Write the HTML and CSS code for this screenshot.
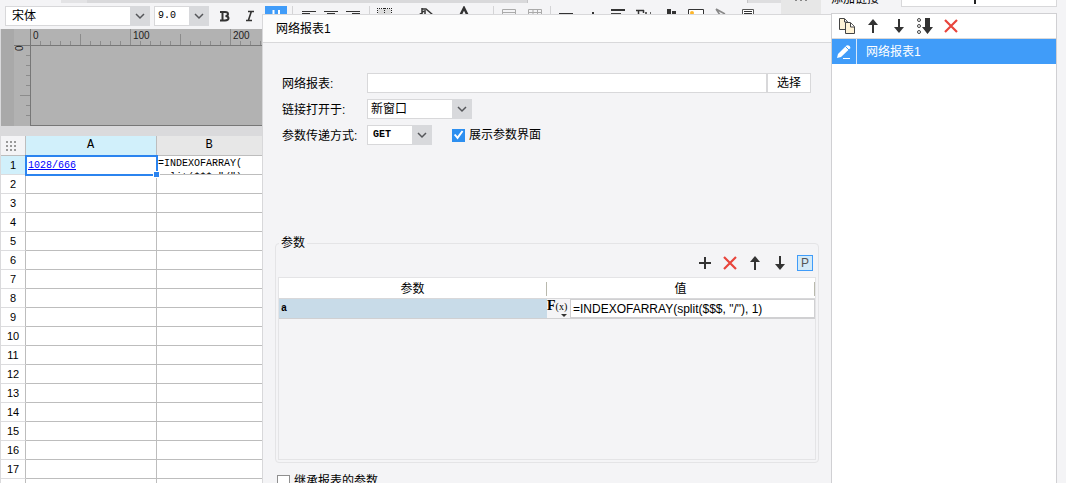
FILE: index.html
```html
<!DOCTYPE html>
<html lang="zh-CN">
<head>
<meta charset="utf-8">
<title>网络报表1</title>
<link rel="stylesheet" href="styles.css">
</head>
<body>
<svg class="defs" aria-hidden="true">
  <symbol id="chevron" viewBox="0 0 20 20"><path d="M6 8l4 4 4-4" fill="none" stroke="#55565a" stroke-width="1.5"/></symbol>
  <symbol id="up" viewBox="0 0 16 16"><path d="M8 15V4" stroke="#333" stroke-width="2"/><path d="M8 1L3 7h10z" fill="#333"/></symbol>
  <symbol id="down" viewBox="0 0 16 16"><path d="M8 1v11" stroke="#333" stroke-width="2"/><path d="M8 15L3 9h10z" fill="#333"/></symbol>
  <symbol id="delete" viewBox="0 0 16 16"><path d="M2 2l12 12M14 2L2 14" stroke="#e8453c" stroke-width="2.2"/></symbol>
</svg>
<div class="app">
  <main class="designer">
    <div class="tabs"><span class="tab-gap"></span><span class="tab-line"></span><span class="tab-space"></span><span class="tab-end"></span><span class="tab-more"><i></i><i></i><i></i></span></div>
    <div class="toolbar">
      <span class="combo font-name"><select aria-label="字体"><option>宋体</option></select><svg><use href="#chevron"/></svg></span>
      <span class="combo font-size"><select aria-label="字号"><option>9.0</option></select><svg><use href="#chevron"/></svg></span>
      <button class="tool bold" aria-label="加粗"><svg viewBox="0 0 26 20"><path d="M9 6h5q3 0 3 2t-2.500 2q3 .2 3 2.300t-3.500 2.200H9M11.500 6v9" fill="none" stroke="#333" stroke-width="2"/></svg></button>
      <button class="tool" aria-label="斜体"><svg viewBox="0 0 26 20"><path d="M11 5.500h6M9 14.500h6M14.500 5l-3 9" fill="none" stroke="#333" stroke-width="1.600"/></svg></button>
      <button class="tool active" aria-label="下划线"><svg viewBox="0 0 22 20"><path d="M8.500 4v8M14 4v8" stroke="#fff" stroke-width="2"/></svg></button>
      <i class="sep"></i>
      <button class="tool align" aria-label="左对齐"><svg viewBox="0 0 22 20"><path d="M4 5.500h14M4 7.500h8M4 11h14" stroke="#333"/></svg></button>
      <button class="tool align" aria-label="居中"><svg viewBox="0 0 22 20"><path d="M4 5.500h14M7 7.500h8M4 11h14" stroke="#333"/></svg></button>
      <button class="tool align" aria-label="右对齐"><svg viewBox="0 0 22 20"><path d="M4 5.500h14M10 7.500h8M4 11h14" stroke="#333"/></svg></button>
      <i class="sep"></i>
      <button class="tool border" aria-label="边框"><svg viewBox="0 0 20 20"><path d="M3 3h13v12H3z" fill="#ddd"/><path d="M2 2.500h15M2.500 2v14M9.500 2v14M16.500 2v14" stroke="#222" stroke-dasharray="1 1"/></svg></button>
      <button class="tool wide" aria-label="背景色"><svg viewBox="0 0 48 20"><path d="M27 2v7M27 3h4l7 6M29 5l-5 4M30 4v5" fill="none" stroke="#333" stroke-width="1.500"/></svg></button>
      <button class="tool wide" aria-label="字色"><svg viewBox="0 0 48 20"><path d="M17 10l4-8 4 8" fill="none" stroke="#333" stroke-width="2.500"/></svg></button>
      <i class="sep tight"></i>
      <button class="tool" aria-label="合并"><svg viewBox="0 0 26 20"><path d="M6.500 3.500h13v12h-13zM6 6.500h14" fill="none" stroke="#aaa"/></svg></button>
      <button class="tool" aria-label="取消合并"><svg viewBox="0 0 26 20"><path d="M6.500 3.500h13v12h-13zM6 6.500h14M11 3v12M15.500 3v12" fill="none" stroke="#aaa"/></svg></button>
      <i class="sep tight"></i>
      <button class="tool" aria-label="单元格"><svg viewBox="0 0 26 20"><path d="M6 8h14" stroke="#333" stroke-width="2"/></svg></button>
      <button class="tool" aria-label="插入"><svg viewBox="0 0 26 20"><path d="M14 6v8" stroke="#333" stroke-width="2"/></svg></button>
      <button class="tool" aria-label="文本"><svg viewBox="0 0 26 20"><path d="M6 4h14" stroke="#333" stroke-width="2"/><path d="M6 7.500h10" stroke="#444"/></svg></button>
      <button class="tool" aria-label="公式"><svg viewBox="0 0 26 20"><path d="M5 4.500h8M7.500 4v10M12.500 4v3M14 7h2M19 7h1" fill="none" stroke="#333" stroke-width="1.500"/></svg></button>
      <button class="tool" aria-label="图表"><svg viewBox="0 0 26 20"><path d="M12 3v11M17 5v9" stroke="#333" stroke-width="4"/></svg></button>
      <button class="tool" aria-label="图片"><svg viewBox="0 0 26 20"><path d="M5.500 3.500h15v12h-15z" fill="#fff" stroke="#333"/><circle cx="9" cy="7" r="2" fill="#fdb62b"/></svg></button>
      <button class="tool" aria-label="斜线"><svg viewBox="0 0 26 20"><path d="M7 3l9 5M7 3l4 6" stroke="#888" stroke-width="1.500"/></svg></button>
      <button class="tool" aria-label="子报表"><svg viewBox="0 0 26 20"><path d="M7.500 3.500h11v14h-11z" fill="#fff" stroke="#555"/><path d="M9 5.500h8M9 7.500h8" stroke="#333"/></svg></button>
    </div>
    <section class="work">
      <div class="ruler">
        <svg viewBox="0 0 261 97" aria-hidden="true">
          <defs>
            <pattern id="tx" x="29" width="10" height="17" patternUnits="userSpaceOnUse"><path d="M.5 12v5" stroke="#8c8c8c"/></pattern>
          </defs>
          <path d="M0 0h13v97H0z" fill="#a9a9a9"/>
          <path d="M30 0h231v17H30z" fill="url(#tx)"/>
          <g stroke="#8c8c8c">
            <path d="M129.500 0v16M229.500 0v16M79.500 5v11M179.500 5v11"/>
            <path d="M25 26.500h5M25 36.500h5M25 46.500h5M25 56.500h5M19 66.500h11M25 76.500h5M25 86.500h5"/>
          </g>
          <path d="M29.500 0v97M13 16.500h248M30 96.500h231" stroke="#777"/>
          <g class="ruler-text"><text x="32" y="10">0</text><text x="132" y="10">100</text><text x="232" y="10">200</text><text transform="translate(22 22) rotate(-90)">0</text></g>
        </svg>
      </div>
      <table class="sheet">
        <thead><tr><th class="corner" aria-label="全选"><svg viewBox="0 0 24 18"><path d="M5 5h12M5 9h12M5 13h12" stroke="#999" stroke-width="2" stroke-dasharray="2 2"/></svg></th><th class="col-a">A</th><th class="col-b">B</th></tr></thead>
        <tbody>
          <tr><th class="current">1</th><td class="selected"><a href="#">1028/666</a><i class="handle"></i></td><td><div class="formula">=INDEXOFARRAY(<br>split($$$,"/"),</div></td></tr>
          <tr><th>2</th><td></td><td></td></tr>
          <tr><th>3</th><td></td><td></td></tr>
          <tr><th>4</th><td></td><td></td></tr>
          <tr><th>5</th><td></td><td></td></tr>
          <tr><th>6</th><td></td><td></td></tr>
          <tr><th>7</th><td></td><td></td></tr>
          <tr><th>8</th><td></td><td></td></tr>
          <tr><th>9</th><td></td><td></td></tr>
          <tr><th>10</th><td></td><td></td></tr>
          <tr><th>11</th><td></td><td></td></tr>
          <tr><th>12</th><td></td><td></td></tr>
          <tr><th>13</th><td></td><td></td></tr>
          <tr><th>14</th><td></td><td></td></tr>
          <tr><th>15</th><td></td><td></td></tr>
          <tr><th>16</th><td></td><td></td></tr>
          <tr><th>17</th><td></td><td></td></tr>
          <tr><th></th><td></td><td></td></tr>
        </tbody>
      </table>
    </section>

    <section class="dialog" role="dialog" aria-labelledby="dialog-title">
      <h1 class="dialog-title" id="dialog-title">网络报表1</h1>
      <form class="dialog-body">
        <div class="fields">
          <label for="report">网络报表:</label>
          <div class="field"><input class="path" id="report" type="text"><button class="choose" type="button">选择</button></div>
          <label for="target">链接打开于:</label>
          <div class="field"><span class="combo target"><select id="target"><option>新窗口</option></select><svg><use href="#chevron"/></svg></span></div>
          <label for="method">参数传递方式:</label>
          <div class="field"><span class="combo method"><select id="method"><option>GET</option></select><svg><use href="#chevron"/></svg></span>
            <label class="check show-ui"><input type="checkbox" checked>展示参数界面</label></div>
        </div>
        <fieldset class="params">
          <legend>参数</legend>
          <div class="param-tools">
            <button type="button" aria-label="添加"><svg viewBox="0 0 16 16"><path d="M8 2v12M2 8h12" stroke="#333" stroke-width="2"/></svg></button>
            <button type="button" aria-label="删除"><svg><use href="#delete"/></svg></button>
            <button type="button" aria-label="上移"><svg><use href="#up"/></svg></button>
            <button type="button" aria-label="下移"><svg><use href="#down"/></svg></button>
            <button type="button" class="p-button">P</button>
          </div>
          <div class="param-box">
            <table class="param-table">
              <thead><tr><th><span>参数</span></th><th><span>值</span></th></tr></thead>
              <tbody><tr><td class="name">a</td><td><div class="value"><button type="button" aria-label="公式"><b>F</b><small>(x)</small><svg viewBox="0 0 6 4"><path d="M0 0h6L3 3z" fill="#333"/></svg></button><input type="text" aria-label="值" value='=INDEXOFARRAY(split($$$, "/"), 1)'></div></td></tr></tbody>
            </table>
          </div>
        </fieldset>
        <label class="check inherit"><input type="checkbox">继承报表的参数</label>
      </form>
    </section>
  </main>

  <aside class="links">
    <div class="add-row"><span>添加链接</span><button aria-label="添加链接"><svg viewBox="0 0 12 12"><path d="M6 0v11M0 5h12" stroke="#222" stroke-width="2"/></svg></button></div>
    <div class="link-box">
      <div class="link-tools">
        <button aria-label="复制"><svg viewBox="0 0 18 18"><path d="M1.500 1.500h5l3 3v8h-8z" fill="#fff3d6" stroke="#444"/><path d="M7.500 5.500h5l4 4v7h-9z" fill="#fff3d6" stroke="#444"/><path d="M6.500 2v3h3M12.500 6v4h4" fill="#fff" stroke="#444"/></svg></button>
        <button aria-label="上移"><svg class="small"><use href="#up"/></svg></button>
        <button aria-label="下移"><svg class="small"><use href="#down"/></svg></button>
        <button aria-label="排序"><svg viewBox="0 0 18 18"><g fill="none" stroke="#444"><circle cx="3" cy="3" r="1.500"/><circle cx="3" cy="9" r="1.500"/><circle cx="3" cy="15" r="1.500"/></g><path d="M9 1h5v9h3l-5.500 7L6 10h3z" fill="#333"/></svg></button>
        <button aria-label="删除"><svg class="small"><use href="#delete"/></svg></button>
      </div>
      <div class="link-item"><button aria-label="编辑"><svg viewBox="0 0 16 16"><path d="M1 14l1-4 8.500-8.500q3.500-1 4 2.500L5 13z" fill="#fff"/><path d="M9.500 2.500l4 4" stroke="#409cf9"/><path d="M7 14.500h7" stroke="#fff"/></svg></button><span>网络报表1</span></div>
    </div>
  </aside>
</div>
</body>
</html>
```
FILE: styles.css
```css
* { box-sizing: border-box; }
body {
  margin: 0;
  background: #f4f4f6;
  color: #000;
  font: 12px/16px "Liberation Sans", "Noto Sans CJK SC", sans-serif;
  overflow: hidden;
}
button, input, select { margin: 0; padding: 0; font: inherit; color: inherit; border: 0; border-radius: 0; background: none; }
button svg { display: block; }
.defs { display: none; }
.app { display: flex; height: 100vh; }
.designer { flex: 1; min-width: 0; position: relative; display: flex; flex-direction: column; overflow: hidden; }

/* Tabs and toolbar */
.tabs { display: flex; height: 3px; padding-left: 61px; }
.tab-gap { width: 26px; background: #e3e3e5; }
.tab-line { width: 441px; background: #d9d9db; border-right: 1px solid #c6c6c8; }
.tab-space { flex: 1; }
.tab-end { width: 34px; background: #dedee0; border-left: 1px solid #c6c6c8; }
.tab-more { width: 40px; height: 14px; margin-right: 10px; background: #e7e7e7; display: flex; justify-content: center; gap: 3px; }
.tab-more i { width: 2px; height: 1px; background: #888; }
.toolbar { display: flex; flex: none; height: 26px; padding: 3px 0 3px 5px; overflow: hidden; }
.combo { display: grid; grid-template: 20px / 1fr 20px; height: 20px; flex: none; }
.combo select { grid-area: 1 / 1 / 2 / 3; height: 20px; appearance: none; background: #fff; border: 1px solid #d8d8da; padding-left: 3px; line-height: 18px; }
.combo svg { grid-area: 1 / 2; width: 20px; height: 20px; background: #d8d9dc; pointer-events: none; z-index: 1; }
.font-name { width: 145px; margin-right: 4px; }
.font-name select { padding-left: 6px; }
.font-size { width: 55px; margin-right: 2px; }
.font-size select, .method select { font-family: "Liberation Mono", monospace; font-size: 10px; }
.method select { font-weight: 700; padding-left: 5px; }
.tool { flex: none; width: 26px; height: 20px; }
.tool svg { width: 100%; height: 20px; }
.tool.active { width: 22px; margin-left: 2px; background: #409cf9; }
.tool.align { width: 22px; }
.tool.border { width: 20px; }
.tool.wide { width: 48px; }
.sep { flex: none; width: 1px; margin: 0 5px; background: #d4d4d6; }
.sep.tight { margin: 0 2px; }

/* Ruler and sheet */
.work { width: 262px; padding-left: 1px; background: #dadadc; }
.ruler { background: #b2b2b2; }
.ruler svg { display: block; width: 100%; }
.ruler-text { font: 10px "Liberation Sans", sans-serif; fill: #222; }
.sheet { width: 100%; margin-top: 10px; border-collapse: separate; border-spacing: 0; table-layout: fixed; background: #fff; }
.sheet th, .sheet td { height: 19px; padding: 0; border: solid #bdbdbd; border-width: 0 1px 1px 0; line-height: 18px; font-weight: 400; }
.sheet tr > :last-child { border-right: 0; }
.sheet thead th { height: 20px; font-family: "Liberation Mono", monospace; line-height: 20px; padding-right: 1px; }
.sheet tbody th { font-size: 11px; border-bottom-color: #dcdcde; }
.sheet thead th { line-height: 19px; }
.sheet .corner { width: 25px; padding: 0; background: #f4f4f6; }
.corner svg { display: block; width: 24px; height: 18px; }
.sheet .col-a { width: 131px; background: #d1f0fb; }
.sheet .col-b { background: #e7e7e7; }
.sheet .current { background: #d1f0fb; }
.sheet .selected { position: relative; padding: 2px 0 0 2px; font: 10px/16px "Liberation Mono", monospace; outline: 2px solid #2b84ef; outline-offset: -1px; }
.selected a { color: #00f; }
.handle { position: absolute; right: -3px; bottom: -3px; width: 5px; height: 5px; background: #2b84ef; outline: 1px solid #fff; }
.formula { height: 18px; padding: 1px 0 0 1px; overflow: hidden; white-space: nowrap; font: 10px/14px "Liberation Mono", monospace; }

/* Dialog */
.dialog { position: absolute; inset: 14px 0 0 262px; background: #f4f4f6; border: solid #d8d8da; border-width: 1px 0 0 1px; }
.dialog-title { margin: 0; height: 28px; padding-left: 13px; border-bottom: 1px solid #d8d8da; background: #fcfcfc; font-size: 12px; font-weight: 400; line-height: 28px; }
.dialog-body { padding: 30px 12px 0; }
.fields { display: grid; grid-template-columns: 79px 1fr; gap: 6px; padding: 0 8px 0 7px; line-height: 22px; grid-auto-rows: 20px; }
.field { display: flex; min-width: 0; }
.path { flex: 1; min-width: 0; height: 20px; padding: 0 3px; background: #fff; border: 1px solid #d8d8da; }
.choose { width: 44px; height: 20px; background: #fff; border: 1px solid #d8d8da; line-height: 18px; }
.target { width: 105px; }
.method { width: 65px; }
.check { display: flex; align-items: center; gap: 4px; }
.check input { appearance: none; width: 13px; height: 13px; border: 1px solid #8f8f8f; background: #fff; }
.check input:checked { border: 0; background: #2d8ff0; display: grid; place-items: center; }
.check input:checked::before { content: ""; width: 11px; height: 11px; background: #fff; clip-path: polygon(8% 50%, 22% 40%, 40% 62%, 80% 8%, 94% 18%, 42% 92%); }
.show-ui { margin-left: 20px; height: 20px; }
.params { margin: 89px 0 0; padding: 0 2px 2px; border: 1px solid #e4e4e6; border-radius: 4px; min-width: 0; }
.params legend { margin-left: 1px; padding: 0 2px; line-height: 18px; }
.param-tools { display: flex; justify-content: flex-end; gap: 9px; padding: 3px 3px 6px 0; }
.param-tools button { width: 16px; height: 16px; }
.param-tools svg { width: 16px; height: 16px; }
.param-tools .p-button { border: 1px solid #409cf9; background: #d3eaf8; color: #555; line-height: 14px; }
.param-box { height: 183px; border: 1px solid #e4e4e6; }
.param-table { width: 100%; table-layout: fixed; border-collapse: collapse; }
.param-table th { padding: 4px 0 2px; background: #fff; border-bottom: 1px solid #d8d8da; font-weight: 400; }
.param-table th span { display: block; border-right: 1px solid #b9b9ad; line-height: 14px; }
.param-table td { padding: 0; height: 20px; border-bottom: 1px solid #d0d0d2; }
.param-table .name { padding-left: 2px; background: #c8dbe8; font: bold 10px "Liberation Mono", monospace; }
.value { display: flex; }
.value button { position: relative; width: 23px; height: 19px; text-align: left; font-family: "Liberation Serif", serif; line-height: 14px; padding-bottom: 4px; white-space: nowrap; }
.value b { font-size: 14px; }
.value small { font-size: 10px; }
.value svg { position: absolute; right: 3px; bottom: 0; width: 6px; height: 4px; }
.value input { flex: 1; min-width: 0; height: 19px; padding: 0 2px; background: #fff; border: 1px solid #d0d0d2; }
.param-table th:first-child, .param-table .name { width: 50%; }
.inherit { margin: 10px 0 0 2px; }

/* Link list */
.links { flex: none; width: 235px; padding-right: 9px; display: flex; flex-direction: column; }
.add-row { display: flex; align-items: flex-end; height: 7px; margin-bottom: 6px; overflow: hidden; }
.add-row span { width: 70px; white-space: nowrap; line-height: 16px; }
.add-row button { flex: 1; height: 16px; padding-right: 8px; background: #fff; border: 1px solid #d8d8da; display: grid; place-items: center; }
.add-row svg { width: 12px; height: 12px; }
.link-box { flex: 1; background: #fff; border: solid #d0d0d3; border-width: 1px 1px 0; }
.link-tools { display: flex; align-items: center; gap: 8px; height: 25px; padding-left: 6px; border-bottom: 1px solid #d8d8da; }
.link-tools button { width: 18px; height: 18px; display: grid; place-items: center; }
.link-tools svg { width: 18px; height: 18px; }
.link-tools .small { width: 16px; height: 16px; }
.link-item { display: flex; align-items: center; height: 25px; background: #409cf9; color: #fff; }
.link-item button { width: 25px; height: 25px; border-right: 1px solid #d8e8fa; display: grid; place-items: center; }
.link-item button svg { width: 16px; height: 16px; }
.link-item span { padding-left: 9px; }
```
